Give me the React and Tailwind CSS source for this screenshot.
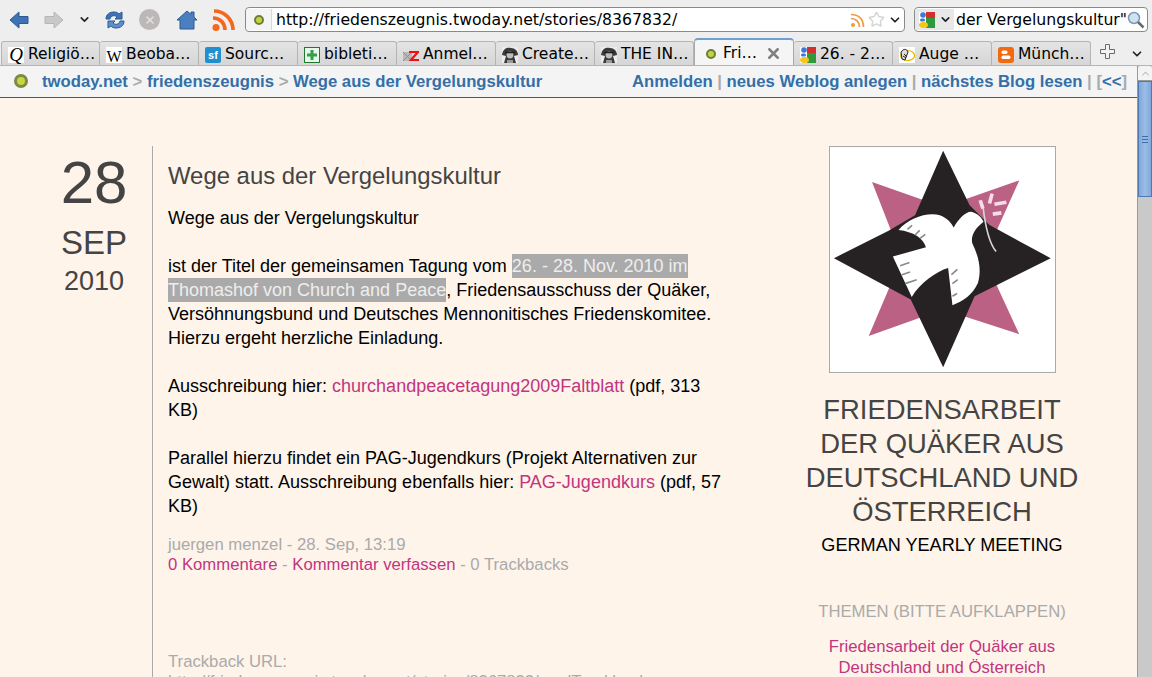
import { ChevronDown, X, Star } from 'lucide-react'

const TABS = [
  { label: 'Religiö…', icon: 'q' },
  { label: 'Beoba…', icon: 'w' },
  { label: 'Sourc…', icon: 'sf' },
  { label: 'bibleti…', icon: 'plus' },
  { label: 'Anmel…', icon: 'z' },
  { label: 'Create…', icon: 'face' },
  { label: 'THE IN…', icon: 'face' },
  { label: 'Fri…', icon: 'dot', active: true },
  { label: '26. - 2…', icon: 'google' },
  { label: 'Auge …', icon: 'eye' },
  { label: 'Münch…', icon: 'blogger' },
]

function GoogleIcon() {
  return (
    <svg width="16" height="16" viewBox="0 0 16 16" className="shrink-0">
      <rect x="0" y="0" width="16" height="16" rx="1" fill="#fff" />
      <rect x="7" y="0" width="9" height="6" fill="#d32f2f" />
      <rect x="7" y="6" width="9" height="10" fill="#2e9a3c" />
      <circle cx="4" cy="3" r="2.800" fill="#3b78d8" />
      <rect x="1" y="6.500" width="5" height="3" rx="1.500" fill="#3b78d8" />
      <ellipse cx="4.500" cy="13" rx="4.500" ry="3" fill="#f5c518" />
    </svg>
  )
}

function Favicon({ type }) {
  if (type === 'q') {
    return <span className="w-4 h-4 shrink-0 bg-white text-black text-[19px] leading-4 italic text-center font-['Liberation_Serif',serif]">Q</span>
  }
  if (type === 'w') {
    return <span className="w-4 h-4 shrink-0 bg-white text-black text-[16px] leading-[19px] text-center font-['Liberation_Serif',serif]">W</span>
  }
  if (type === 'sf') {
    return <span className="w-4 h-4 shrink-0 rounded-[2px] bg-[#1f8fd0] text-white text-[11px] leading-4 font-bold text-center font-['Liberation_Sans',sans-serif]">sf</span>
  }
  if (type === 'plus') {
    return (
      <svg width="16" height="16" viewBox="0 0 16 16" className="shrink-0">
        <rect x="0.500" y="0.500" width="15" height="15" fill="#e8f5e8" stroke="#1c7a35" />
        <path d="M6.500 3h3v3.500H13v3H9.500V13h-3V9.500H3v-3h3.500z" fill="#2f9e4f" />
      </svg>
    )
  }
  if (type === 'z') {
    return (
      <svg width="16" height="16" viewBox="0 0 16 16" className="shrink-0">
        <rect x="0" y="5" width="9" height="9" fill="#b9b9b9" />
        <path d="M0 5l9 9M9 5l-9 9" stroke="#8f8f8f" />
        <path d="M6 5h9l-7 8h8" fill="none" stroke="#ee1111" strokeWidth="2.200" />
      </svg>
    )
  }
  if (type === 'face') {
    return (
      <svg width="16" height="16" viewBox="0 0 16 16" className="shrink-0">
        <rect width="16" height="16" fill="#ececec" />
        <path d="M0 8C1 1 6 0 9 1c4 0 7 3 7 7l-4 1 2 7H2l2-7z" fill="#3a3a3a" />
        <circle cx="8" cy="8" r="3.400" fill="#bdbdbd" />
        <path d="M3 5.500h10" stroke="#1f1f1f" strokeWidth="1.600" />
        <path d="M5 13h6v3H5z" fill="#9a9a9a" />
      </svg>
    )
  }
  if (type === 'dot') {
    return <span className="w-[10px] h-[10px] mx-[2px] shrink-0 rounded-full bg-[#c6d23a] border-2 border-[#6f7d3a]" />
  }
  if (type === 'google') return <GoogleIcon />
  if (type === 'eye') {
    return (
      <svg width="16" height="16" viewBox="0 0 16 16" className="shrink-0">
        <rect width="16" height="16" fill="#fff" />
        <ellipse cx="8.500" cy="8.500" rx="7" ry="5" fill="#fff" stroke="#e0b800" strokeWidth="1.200" />
        <path d="M2 5c3-4 6-3 7 0l-3 8-3-1z" fill="#ddd" stroke="#222" />
        <path d="M5 7l3 3M4 9l3 2" stroke="#222" />
      </svg>
    )
  }
  return (
    <svg width="16" height="16" viewBox="0 0 16 16" className="shrink-0">
      <rect width="16" height="16" rx="3" fill="#f26a0f" />
      <rect x="3.500" y="3.500" width="6" height="3.400" rx="1.600" fill="#fff" />
      <rect x="3.500" y="8.600" width="9" height="3.400" rx="1.600" fill="#fff" />
    </svg>
  )
}

function Tab({ tab }) {
  if (tab.active) {
    return (
      <div className="w-[100px] h-[27px] flex items-center pt-[2px] pl-[9px] pr-[11px] gap-[5px] bg-[#f5f5f5] border border-[#a9a9a9] border-t-2 border-t-[#6f9fd0] border-b-0 rounded-t-[4px]">
        <Favicon type={tab.icon} />
        <span className="flex-1 text-[15.5px] text-black whitespace-nowrap">{tab.label}</span>
        <X size={17} strokeWidth={3.500} className="text-[#808080]" />
      </div>
    )
  }
  return (
    <div className="w-[99px] h-[24px] flex items-center pt-[3px] pl-[6px] gap-[4px] bg-gradient-to-b from-[#e4e4e4] to-[#d6d6d6] border border-[#b4b4b4] border-b-0 border-l-0 first:border-l rounded-t-[3px] overflow-hidden">
      <Favicon type={tab.icon} />
      <span className="text-[15.5px] text-black whitespace-nowrap">{tab.label}</span>
    </div>
  )
}

function BackIcon() {
  return (
    <svg width="20" height="20" viewBox="0 0 20 20">
      <path d="M1 10l9-8v4.500h9v7h-9V18z" fill="#3d73b4" stroke="#2c5a94" />
    </svg>
  )
}

function ForwardIcon() {
  return (
    <svg width="20" height="20" viewBox="0 0 20 20">
      <path d="M19 10l-9-8v4.500H1v7h9V18z" fill="#c9c9c9" stroke="#b6b6b6" />
    </svg>
  )
}

function ReloadIcon() {
  return (
    <svg width="20" height="20" viewBox="0 0 20 20">
      <path d="M1 9c0-5 4-7 8-7 3 0 4 1 5 2l3-2v7h-7l2-2c-2-2-6-2-7 2z" fill="#3d73b4" stroke="#2c5a94" />
      <path d="M19 11c0 5-4 7-8 7-3 0-4-1-5-2l-3 2v-7h7l-2 2c2 2 6 2 7-2z" fill="#5c90cc" stroke="#2c5a94" />
    </svg>
  )
}

function HomeIcon() {
  return (
    <svg width="22" height="20" viewBox="0 0 22 20">
      <path d="M1 10l10-9 4 3.500V2h3v5l3 3h-3v9H4v-9z" fill="#4a80c0" stroke="#2c5a94" />
    </svg>
  )
}

function RssBig() {
  return (
    <svg width="24" height="24" viewBox="0 0 24 24">
      <circle cx="5" cy="19.500" r="3.500" fill="#f4681c" />
      <path d="M2 10c7 0 12 5 12 12" fill="none" stroke="#f4681c" strokeWidth="3.600" />
      <path d="M3 3c10 0 19 8 19 19" fill="none" stroke="#f4681c" strokeWidth="3.600" />
    </svg>
  )
}

function RssSmall() {
  return (
    <svg width="16" height="16" viewBox="0 0 16 16">
      <circle cx="3" cy="13" r="2" fill="#f09a3a" />
      <path d="M1 6.500c5 0 8.500 3.500 8.500 8.500" fill="none" stroke="#f09a3a" strokeWidth="1.700" />
      <path d="M1 2.500c8 0 12.500 5 12.500 12.500" fill="none" stroke="#f09a3a" strokeWidth="1.700" />
    </svg>
  )
}

function SearchGlass() {
  return (
    <svg width="18" height="18" viewBox="0 0 18 18" className="shrink-0 mr-[2px]">
      <circle cx="7" cy="7" r="5.500" fill="#cfe2f3" stroke="#7d98b3" strokeWidth="1.500" />
      <path d="M11 11l5.500 5.500" stroke="#6b6b6b" strokeWidth="2.500" />
    </svg>
  )
}

function PlusOutline() {
  return (
    <svg width="18" height="18" viewBox="0 0 18 18" className="ml-[8px] mb-[4px]">
      <path d="M6.500 1.500h4v5h5v4h-5v5h-4v-5h-5v-4h5z" fill="#f2f2f2" stroke="#6a6a6a" />
    </svg>
  )
}

function Toolbar() {
  return (
    <div className="h-[39px] flex items-center bg-[#eeeeee] pl-[9px] pr-[4px]">
      <BackIcon />
      <div className="ml-[15px]"><ForwardIcon /></div>
      <ChevronDown size={13} strokeWidth={3} className="ml-[14px] text-[#222]" />
      <div className="ml-[14px]"><ReloadIcon /></div>
      <div className="ml-[14px] w-[21px] h-[21px] rounded-full bg-[#bcb8b8] flex items-center justify-center">
        <X size={12} strokeWidth={3} className="text-[#e4e2e2]" />
      </div>
      <div className="ml-[16px]"><HomeIcon /></div>
      <div className="ml-[13px]"><RssBig /></div>
      <div className="ml-[10px] w-[660px] h-[25px] flex items-center bg-white border border-[#8a8a8a] rounded-[4px]">
        <div className="w-[26px] h-[21px] flex items-center justify-center border-r border-[#d8d8d8] bg-[#f4f4f4] rounded-l-[4px]">
          <span className="w-[10px] h-[10px] rounded-full bg-[#c6d23a] border-2 border-[#6f7d3a]" />
        </div>
        <span className="ml-[4px] flex-1 text-[15.7px] text-black whitespace-nowrap">http://friedenszeugnis.twoday.net/stories/8367832/</span>
        <RssSmall />
        <Star size={17} className="ml-[2px] text-[#d4d4d4]" />
        <ChevronDown size={14} strokeWidth={3} className="ml-[3px] mr-[2px] text-[#222]" />
      </div>
      <div className="ml-[9px] w-[234px] h-[25px] flex items-center bg-white border border-[#8a8a8a] rounded-[4px] overflow-hidden">
        <div className="w-[39px] h-[21px] shrink-0 flex items-center pl-[4px] bg-[#e8e8e8]">
          <GoogleIcon />
          <ChevronDown size={13} strokeWidth={3} className="ml-[4px] text-[#222]" />
        </div>
        <div className="flex-1 w-0 overflow-hidden flex justify-end">
          <span className="text-[15.7px] text-black whitespace-nowrap">aus der Vergelungskultur"</span>
        </div>
        <SearchGlass />
      </div>
    </div>
  )
}

function TabBar() {
  return (
    <div className="h-[27px] flex items-end bg-[#eeeeee] border-b border-[#b4b4b4] pl-[1px]">
      {TABS.map(t => <Tab key={t.label} tab={t} />)}
      <PlusOutline />
      <ChevronDown size={14} strokeWidth={3} className="ml-[13px] mb-[4px] text-[#222]" />
    </div>
  )
}

function NavLink({ children }) {
  return <a className="text-[#336fa8]">{children}</a>
}

function SiteBar() {
  return (
    <div className="h-[32px] shrink-0 flex items-center justify-between bg-[#f4f4f4] border-b border-[#555] pl-[14px] pr-[10px] text-[16.7px] font-bold text-[#aaaaaa] font-['Liberation_Sans',sans-serif]">
      <div className="flex items-center">
        <span className="w-[14px] h-[14px] rounded-full bg-[#c9d63f] border-[3px] border-[#7b8a45]" />
        <span className="ml-[14px]">
          <NavLink>twoday.net</NavLink> &gt; <NavLink>friedenszeugnis</NavLink> &gt; <NavLink>Wege aus der Vergelungskultur</NavLink>
        </span>
      </div>
      <div>
        <NavLink>Anmelden</NavLink> | <NavLink>neues Weblog anlegen</NavLink> | <NavLink>nächstes Blog lesen</NavLink> | [<NavLink>&lt;&lt;</NavLink>]
      </div>
    </div>
  )
}

function Logo() {
  return (
    <svg width="225" height="225" viewBox="28 20 680 678">
      <rect x="28" y="20" width="680" height="678" fill="#fff" />
      <polygon points="155,125 370,200 600,120 494,355 600,585 370,510 145,590 245,355" fill="#bb6284" />
      <polygon points="370,30 450,195 510,255 695,355 465,470 370,685 272,480 40,355 205,272 285,225" fill="#262223" />
      <path d="M235 270C265 235 320 215 360 225C385 235 395 250 402 262C415 240 435 215 455 215C475 220 485 232 492 245C470 262 452 285 458 310C475 345 488 385 475 430C460 465 430 485 398 497L385 385C350 395 300 430 275 472L218 350L318 322C310 295 280 275 235 270Z" fill="#fff" />
      <path d="M240 378l28 -10M245 405l25 -8M255 432l35 -12M262 268l14 -12M285 285l14 -14M300 295l16 -12M395 405l18 -16M398 432l16 -12M398 470l14 -8" stroke="#8a8a8a" strokeWidth="5" fill="none" />
      <path d="M490 195C495 240 505 305 530 335" stroke="#d6d6d6" strokeWidth="5" fill="none" />
      <path d="M490 205l-8 -25M510 190l8 -30M525 192l36 -6M520 222l26 -4" stroke="#f6dce6" strokeWidth="11" fill="none" />
    </svg>
  )
}

function Article() {
  return (
    <div className="w-[560px] ml-[15px] text-[18px] leading-[24px] text-black">
      <h1 className="text-[23.9px] leading-[30px] font-normal text-[#444444] mt-[15px] mb-[15px]">Wege aus der Vergelungskultur</h1>
      <p>Wege aus der Vergelungskultur</p>
      <br />
      <p>
        ist der Titel der gemeinsamen Tagung vom <span className="bg-[#aaaaaa] text-[#eeeeee] py-[2px]">26. - 28. Nov. 2010 im Thomashof von Church and Peace</span>, Friedensausschuss der Quäker, Versöhnungsbund und Deutsches Mennonitisches Friedenskomitee. Hierzu ergeht herzliche Einladung.
      </p>
      <br />
      <p>Ausschreibung hier: <a className="text-[#c2357f]">churchandpeacetagung2009Faltblatt</a> (pdf, 313 KB)</p>
      <br />
      <p>Parallel hierzu findet ein PAG-Jugendkurs (Projekt Alternativen zur Gewalt) statt. Ausschreibung ebenfalls hier: <a className="text-[#c2357f]">PAG-Jugendkurs</a> (pdf, 57 KB)</p>
      <div className="mt-[17px] text-[16.7px] leading-[20px] text-[#aaaaaa]">
        <div>juergen menzel - 28. Sep, 13:19</div>
        <div><a className="text-[#c2357f]">0 Kommentare</a> - <a className="text-[#c2357f]">Kommentar verfassen</a> - 0 Trackbacks</div>
      </div>
      <div className="mt-[77px] text-[16.7px] leading-[20px] text-[#aaaaaa]">
        <div>Trackback URL:</div>
        <div>http://friedenszeugnis.twoday.net/stories/8367832/modTrackback</div>
      </div>
    </div>
  )
}

function Sidebar() {
  return (
    <div className="w-[280px] ml-[74px] pt-[48px] flex flex-col items-center text-center">
      <div className="border border-[#aaaaaa]"><Logo /></div>
      <div className="mt-[20px] text-[27.4px] leading-[34px] text-[#444444] whitespace-nowrap">
        FRIEDENSARBEIT<br />DER QUÄKER AUS<br />DEUTSCHLAND UND<br />ÖSTERREICH
      </div>
      <div className="mt-[2px] text-[18.1px] leading-[28px] text-black whitespace-nowrap">GERMAN YEARLY MEETING</div>
      <div className="mt-[41px] text-[16.7px] leading-[24px] text-[#aaaaaa] whitespace-nowrap">THEMEN (BITTE AUFKLAPPEN)</div>
      <div className="mt-[12px] w-[240px] text-[16.7px] leading-[21px] text-[#c2357f]">Friedensarbeit der Quäker aus Deutschland und Österreich</div>
    </div>
  )
}

function Scrollbar() {
  return (
    <div className="w-[15px] shrink-0 flex flex-col bg-[#c9c9c9] border-l border-[#999]">
      <div className="h-[15px] bg-[#f4f4f4] border-b border-[#999] flex items-center justify-center rounded-t-[3px]">
        <ChevronDown size={11} className="rotate-180 text-[#999]" />
      </div>
      <div className="h-[116px] bg-gradient-to-r from-[#7fa8dc] via-[#9dbde6] to-[#7fa8dc] border border-[#4f79b0] flex flex-col items-center justify-center gap-[2px]">
        <span className="w-[6px] h-px bg-[#3e6ca6]" />
        <span className="w-[6px] h-px bg-[#3e6ca6]" />
        <span className="w-[6px] h-px bg-[#3e6ca6]" />
      </div>
    </div>
  )
}

export default function App() {
  return (
    <div className="w-[1152px] h-[677px] overflow-hidden flex flex-col bg-[#fef4ea] font-['Liberation_Sans',sans-serif]">
      <div className="font-['DejaVu_Sans',sans-serif]">
        <Toolbar />
        <TabBar />
      </div>
      <div className="flex-1 min-h-0 flex">
        <div className="flex-1 min-w-0 flex flex-col">
          <SiteBar />
          <div className="flex-1 min-h-0 flex pt-[48px] overflow-hidden">
            <div className="w-[152px] shrink-0 pl-[60px] pr-[24px] flex flex-col items-center text-[#444444]">
              <div className="text-[60px] leading-[74px]">28</div>
              <div className="text-[33px] leading-[38px] mt-[4px]">SEP</div>
              <div className="text-[27px] leading-[38px]">2010</div>
            </div>
            <div className="border-l border-[#aaaaaa] flex">
              <Article />
              <div className="-mt-[48px]"><Sidebar /></div>
            </div>
          </div>
        </div>
        <Scrollbar />
      </div>
    </div>
  )
}
